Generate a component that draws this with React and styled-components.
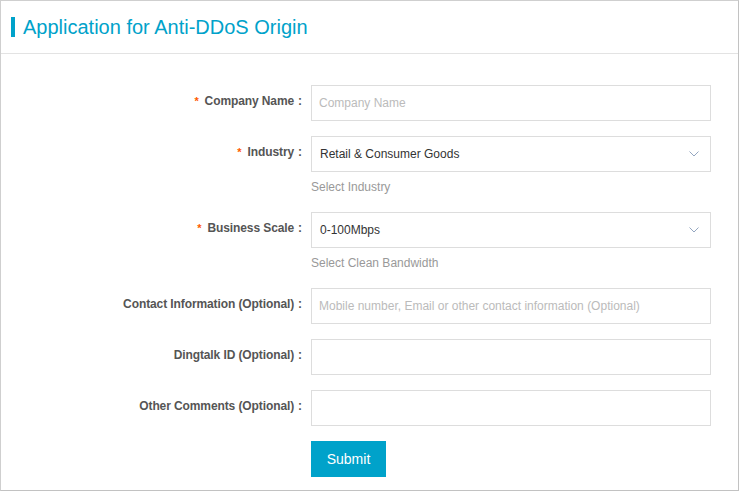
import styled, { createGlobalStyle } from "styled-components";

const GlobalStyle = createGlobalStyle`
  html, body {
    margin: 0;
    padding: 0;
    background: #fff;
  }
  body {
    font-family: "Liberation Sans", Arial, sans-serif;
  }
  * {
    box-sizing: border-box;
  }
`;

const fields = [
  { label: "Company Name", required: true, placeholder: "Company Name" },
  {
    label: "Industry",
    required: true,
    select: true,
    value: "Retail & Consumer Goods",
    help: "Select Industry",
  },
  {
    label: "Business Scale",
    required: true,
    select: true,
    value: "0-100Mbps",
    help: "Select Clean Bandwidth",
  },
  {
    label: "Contact Information (Optional)",
    placeholder: "Mobile number, Email or other contact information (Optional)",
  },
  { label: "Dingtalk ID (Optional)" },
  { label: "Other Comments (Optional)" },
];

const Chevron = () => (
  <svg width="10" height="6" viewBox="0 0 10 6">
    <polyline points="0.5,0.5 5,5 9.5,0.5" fill="none" stroke="#94a6c0" strokeWidth="1" />
  </svg>
);

const App = () => {
  return (
    <>
      <GlobalStyle />
      <Page>
        <Header>
          <TitleBar />
          <Title>Application for Anti-DDoS Origin</Title>
        </Header>
        <Form onSubmit={(e) => e.preventDefault()}>
          {fields.map((f) => (
            <Row key={f.label}>
              <Label>
                {f.required && <Star>*</Star>}
                {f.label}
                <Colon>:</Colon>
              </Label>
              <Field>
                {f.select ? (
                  <Select>
                    <span>{f.value}</span>
                    <Chevron />
                  </Select>
                ) : (
                  <Input placeholder={f.placeholder} />
                )}
                {f.help && <Help>{f.help}</Help>}
              </Field>
            </Row>
          ))}
          <Row>
            <Label />
            <Field>
              <SubmitButton type="submit">Submit</SubmitButton>
            </Field>
          </Row>
        </Form>
      </Page>
    </>
  );
};

const Page = styled.div`
  width: 739px;
  height: 491px;
  border: 1px solid #cfcfcf;
  border-right-color: #c2c2c2;
  border-bottom-color: #c2c2c2;
  background: #fff;
  overflow: hidden;
`;

const Header = styled.div`
  height: 53px;
  display: flex;
  align-items: center;
  padding-left: 10px;
  border-bottom: 1px solid #e3e3e3;
`;

const TitleBar = styled.div`
  width: 4px;
  height: 20px;
  background: #00a2ca;
  margin-right: 8px;
`;

const Title = styled.h1`
  margin: 0;
  font-size: 20px;
  font-weight: normal;
  color: #00a2ca;
  line-height: 24px;
`;

const Form = styled.form`
  padding-top: 31px;
`;

const Row = styled.div`
  display: flex;
  margin-bottom: 15px;
`;

const Label = styled.label`
  width: 301px;
  flex-shrink: 0;
  margin-right: 9px;
  text-align: right;
  font-size: 12px;
  font-weight: bold;
  letter-spacing: -0.1px;
  color: #555;
  line-height: 32px;
`;

const Star = styled.span`
  color: #ff5a00;
  margin-right: 6px;
  font-size: 11px;
`;

const Colon = styled.span`
  margin-left: 4px;
`;

const Field = styled.div`
  width: 400px;
  display: flex;
  flex-direction: column;
  align-items: flex-start;
`;

const Input = styled.input`
  width: 400px;
  height: 36px;
  border: 1px solid #dddddd;
  padding: 0 7px;
  font-family: "Liberation Sans", Arial, sans-serif;
  font-size: 12px;
  color: #333;
  outline: none;
  &::placeholder {
    color: #bbb;
  }
`;

const Select = styled.div`
  width: 400px;
  height: 36px;
  border: 1px solid #dddddd;
  padding: 0 11px 0 8px;
  display: flex;
  align-items: center;
  justify-content: space-between;
  font-size: 12px;
  color: #333;
`;

const Help = styled.div`
  margin-top: 5px;
  line-height: 20px;
  font-size: 12px;
  color: #999;
`;

const SubmitButton = styled.button`
  width: 75px;
  height: 36px;
  border: none;
  background: #00a2ca;
  color: #fff;
  font-family: "Liberation Sans", Arial, sans-serif;
  font-size: 14px;
  cursor: pointer;
`;

export default App;
